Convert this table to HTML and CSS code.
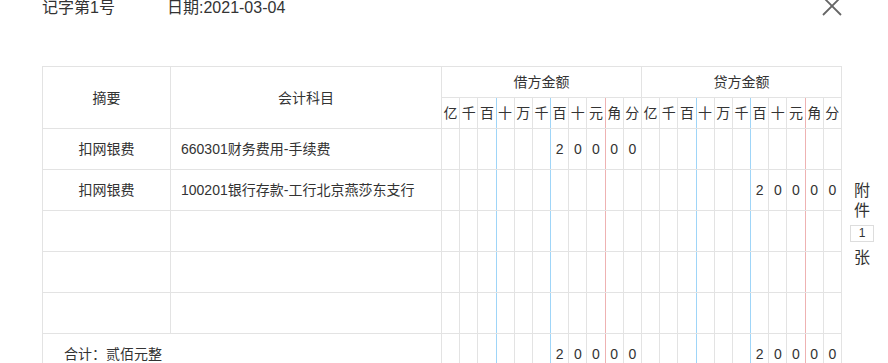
FILE: index.html
```html
<!DOCTYPE html>
<html lang="zh-CN">
<head>
  <meta charset="UTF-8">
  <title>记账凭证</title>
  <link rel="stylesheet" href="styles.css">
</head>
<body>
  <div class="voucher">
    <!-- voucher number, date and close button -->
    <div class="voucher-head">
      <span class="voucher-no">记字第1号</span>
      <span class="voucher-date">日期:2021-03-04</span>
      <a class="close" href="#">
        <svg width="20" height="20" viewBox="0 0 20 20"><path d="M1 1 L19 19 M19 1 L1 19" stroke="#666" stroke-width="1.8" fill="none"/></svg>
      </a>
    </div>

    <div class="voucher-body">
      <table class="entries">
        <colgroup>
          <col class="c-memo"><col class="c-subject">
          <col span="22" class="c-digit">
        </colgroup>
        <thead>
          <tr>
            <th rowspan="2">摘要</th>
            <th rowspan="2">会计科目</th>
            <th colspan="11" class="side">借方金额</th>
            <th colspan="11" class="side">贷方金额</th>
          </tr>
          <tr class="units">
            <th>亿</th><th>千</th><th class="sep">百</th><th>十</th><th>万</th><th class="sep">千</th><th>百</th><th>十</th><th class="dot">元</th><th>角</th><th>分</th>
            <th>亿</th><th>千</th><th class="sep">百</th><th>十</th><th>万</th><th class="sep">千</th><th>百</th><th>十</th><th class="dot">元</th><th>角</th><th>分</th>
          </tr>
        </thead>
        <tbody id="rows"></tbody>
      </table>

      <!-- attachment count -->
      <div class="attach">
        <span>附</span>
        <span>件</span>
        <span class="attach-num">1</span>
        <span>张</span>
      </div>
    </div>
  </div>

  <script>
    var rows = [
      { memo: "扣网银费", subject: "660301财务费用-手续费", debit: "20000", credit: "" },
      { memo: "扣网银费", subject: "100201银行存款-工行北京燕莎东支行", debit: "", credit: "20000" },
      { memo: "", subject: "", debit: "", credit: "" },
      { memo: "", subject: "", debit: "", credit: "" },
      { memo: "", subject: "", debit: "", credit: "" }
    ];

    // one amount split across 11 digit cells, right aligned
    function digitCells(amount) {
      var padded = ("           " + amount).slice(-11);
      var html = "";
      for (var i = 0; i < 11; i++) {
        var cls = (i === 2 || i === 5) ? ' class="sep"' : (i === 8 ? ' class="dot"' : "");
        html += "<td" + cls + ">" + padded.charAt(i).trim() + "</td>";
      }
      return html;
    }

    var body = document.getElementById("rows");
    var html = "";
    rows.forEach(function (r) {
      html += '<tr><td class="memo">' + r.memo + '</td><td class="subject">' + r.subject + "</td>" +
        digitCells(r.debit) + digitCells(r.credit) + "</tr>";
    });
    html += '<tr class="total"><td colspan="2" class="total-label">合计：贰佰元整</td>' +
      digitCells("20000") + digitCells("20000") + "</tr>";
    body.innerHTML = html;
  </script>
</body>
</html>
```

FILE: styles.css
```css
/* Voucher dialog layout */
html, body {
  margin: 0;
  padding: 0;
  background: #fff;
  overflow: hidden;
}
body {
  font-family: "Liberation Sans", "Noto Sans CJK SC", sans-serif;
  font-size: 14px;
  color: #333;
}
.voucher-head {
  display: flex;
  align-items: flex-start;
  height: 16px;
  padding-left: 42px;
  font-size: 16px;
  line-height: 16px;
}
.voucher-no {
  width: 125px;
}
.close {
  display: block;
  width: 20px;
  height: 20px;
  margin: -4px 46px 0 auto;
}
.close svg {
  display: block;
}
.voucher-body {
  display: flex;
  align-items: flex-start;
  padding: 50px 0 0 42px;
}

/* Entry table */
.entries {
  width: 800px;
  border-collapse: collapse;
  table-layout: fixed;
}
.c-memo { width: 128px; }
.c-subject { width: 271px; }
.c-digit { width: 18.18px; }
.entries th, .entries td {
  border: 1px solid #e3e3e3;
  padding: 0;
  text-align: center;
  font-weight: normal;
  white-space: nowrap;
  overflow: hidden;
}
.entries th {
  height: 30px;
  line-height: 16px;
}
.entries td {
  height: 40px;
  line-height: 16px;
}
/* thousands separators in blue, decimal point in red */
.entries .sep {
  border-right-color: #9fd5f8;
}
.entries .sep + th, .entries .sep + td {
  border-left-color: #9fd5f8;
}
.entries .dot {
  border-right-color: #eeb2b2;
}
.entries .dot + th, .entries .dot + td {
  border-left-color: #eeb2b2;
}
.entries td.subject {
  text-align: left;
  padding-left: 10px;
}
.entries td.total-label {
  text-align: left;
  padding-left: 21px;
}

/* Attachment count column */
.attach {
  display: flex;
  flex-direction: column;
  align-items: center;
  width: 24px;
  margin: 115px 0 0 8px;
  font-size: 16px;
  line-height: 20px;
}
.attach-num {
  box-sizing: border-box;
  width: 24px;
  height: 17px;
  margin: 4px 0 6px;
  border: 1px solid #ddd;
  font-size: 12px;
  line-height: 15px;
  text-align: center;
}
```
